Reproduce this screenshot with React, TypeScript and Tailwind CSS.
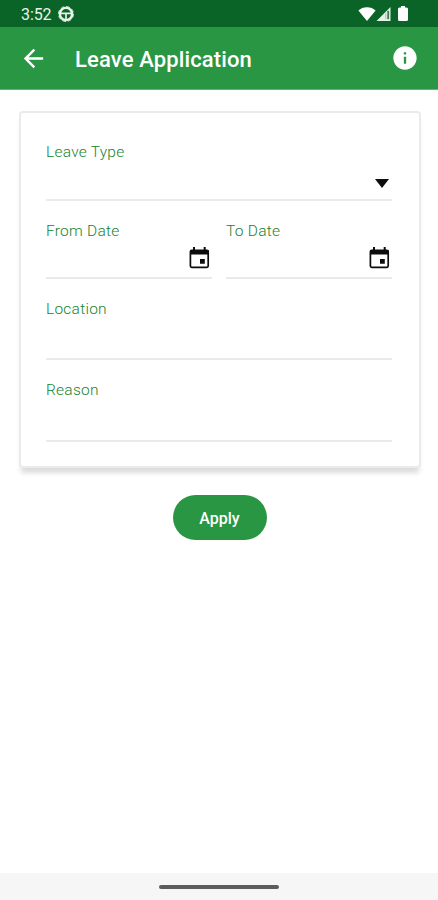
import type { ReactNode } from "react";
import { MdArrowBack, MdInfo } from "react-icons/md";

function CalendarIcon() {
	return (
		<svg
			className="ml-auto mr-[2px] mt-[7px] text-[#0c0c0c]"
			width="21"
			height="22"
			viewBox="0 0 21 22"
			fill="currentColor"
		>
			<rect x="1.4" y="3.4" width="17.8" height="17" rx="1.3" fill="none" stroke="currentColor" strokeWidth="1.7" />
			<path d="M1 3h18.600v4.500H1zM4 0h2v4H4zM14.700 0h2v4h-2zM11 12h4.800v4.800H11z" />
		</svg>
	);
}

function StatusBar() {
	return (
		<div className="flex h-[27px] items-center justify-between bg-[#0b6427] pl-[21px] pr-[30px] text-[#e9f3ea]">
			<div className="flex items-center gap-[7px]">
				<span className="w-[30px] whitespace-nowrap pt-[2px] text-[16px] leading-[25px] tracking-[-0.1px]">
					3:52
				</span>
				<svg width="16" height="16" viewBox="0 0 16 16" fill="none" stroke="currentColor">
					<circle cx="8" cy="8" r="6.1" strokeWidth="2.4" />
					<circle cx="8" cy="8" r="7.5" strokeWidth="0.9" strokeDasharray="3.9 1.99" />
					<path d="M3 7.300h10M8 8v5" strokeWidth="1.7" />
				</svg>
			</div>
			<div className="flex items-center">
				<svg width="18" height="14" viewBox="0 0 18 14" fill="#ffffff">
					<path d="M9 14 .4 3.600C2.600 1.500 5.600.3 9 .3s6.400 1.200 8.600 3.300z" />
				</svg>
				<svg width="15" height="14" viewBox="0 0 15 14">
					<path d="M14.500 0v14H.5z" fill="#e6f1e8" />
					<path d="M9.800 6.500v5.700" stroke="#9fc2aa" strokeWidth="1" />
					<path d="M12.200 3.800v8.400" stroke="#3c7d50" strokeWidth="1.8" />
				</svg>
				<svg className="ml-[7px]" width="10" height="15" viewBox="0 0 10 15" fill="#ffffff">
					<path d="M3 0h4v1.500h1.500A1.500 1.500 0 0 1 10 3v10.500a1.500 1.500 0 0 1-1.500 1.500h-7A1.500 1.500 0 0 1 0 13.500V3a1.500 1.500 0 0 1 1.500-1.500H3z" />
				</svg>
			</div>
		</div>
	);
}

function Header() {
	return (
		<header className="flex h-[63px] items-center border-b border-[#68b27a] bg-[#299644] px-[19px] text-white">
			<MdArrowBack size={29} />
			<h1 className="ml-[27px] flex-1 whitespace-nowrap pt-[2px] text-[22px] font-medium tracking-[0.13px]">
				Leave Application
			</h1>
			<MdInfo size={28} />
		</header>
	);
}

function Field({
	label,
	className,
	children,
}: {
	label: string;
	className: string;
	children?: ReactNode;
}) {
	return (
		<div className={`flex flex-col border-b-2 border-[#e9ebeb] ${className}`}>
			<span className="whitespace-nowrap pl-[0.5px] text-[15.5px] leading-[18px] font-light tracking-[0.25px] text-[#17832f]">
				{label}
			</span>
			{children}
		</div>
	);
}

export default function App() {
	return (
		<div className="flex h-[900px] w-[438px] flex-col bg-white font-['Roboto',sans-serif]">
			<StatusBar />
			<Header />
			<main className="flex flex-1 flex-col items-center pt-[21px]">
				<section className="ml-px h-[357px] w-[402px] rounded-[4px] border-2 border-[#ebebeb] bg-white pl-[25px] pr-[27px] pt-[30px] shadow-[0_7px_5px_-2px_rgba(0,0,0,0.14)]">
					<Field label="Leave Type" className="h-[58px]">
						<svg className="ml-auto mr-[3px] mt-[18px]" width="14" height="9" viewBox="0 0 14 9">
							<path d="M0 0h14L7 9z" fill="#0c0c0c" />
						</svg>
					</Field>
					<div className="mt-[21px] grid grid-cols-[166px_166px] justify-between">
						<Field label="From Date" className="h-[57px]">
							<CalendarIcon />
						</Field>
						<Field label="To Date" className="h-[57px]">
							<CalendarIcon />
						</Field>
					</div>
					<Field label="Location" className="mt-[21px] h-[60px]" />
					<Field label="Reason" className="mt-[21px] h-[61px]" />
				</section>
				<button
					type="button"
					className="ml-px mt-[27px] h-[45px] w-[94px] rounded-full bg-[#299644] pt-[2px] text-[16px] font-medium text-white"
				>
					Apply
				</button>
			</main>
			<div className="flex h-[27px] items-center justify-center bg-[#f6f6f6]">
				<div className="h-[4px] w-[120px] rounded-full bg-[#5c5c5c]" />
			</div>
		</div>
	);
}
